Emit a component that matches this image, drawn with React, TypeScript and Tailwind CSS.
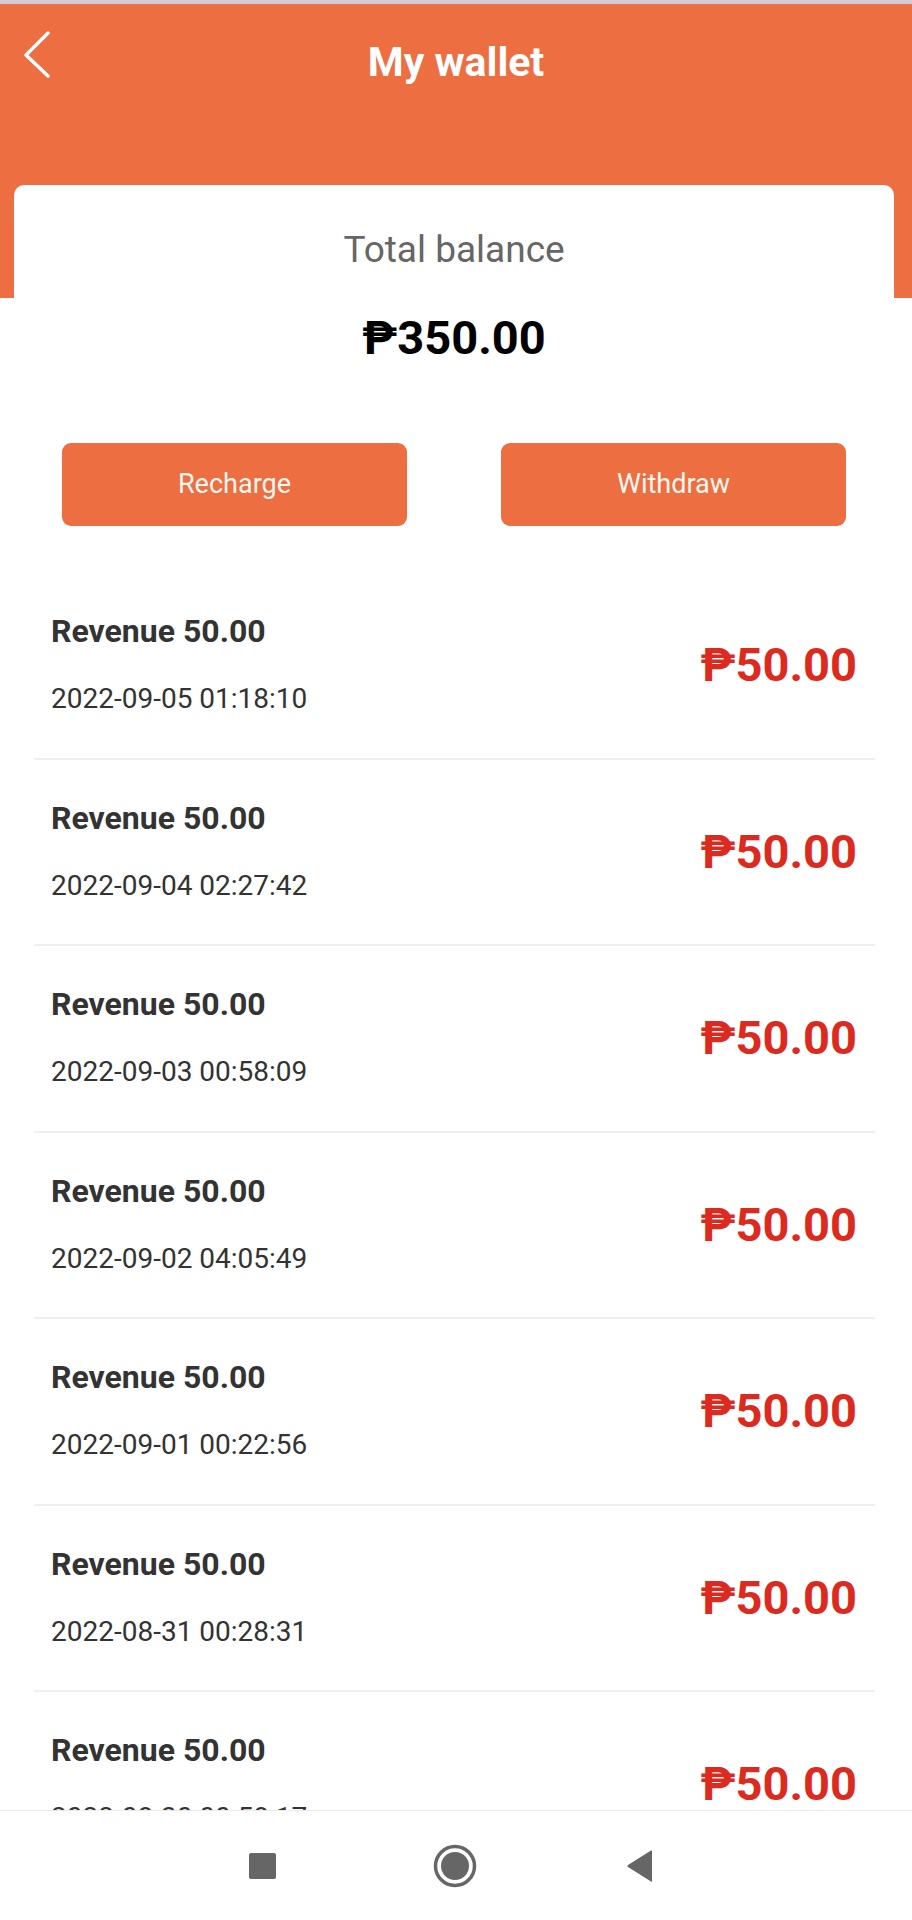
import React from "react";

const rows = [
  "2022-09-05 01:18:10",
  "2022-09-04 02:27:42",
  "2022-09-03 00:58:09",
  "2022-09-02 04:05:49",
  "2022-09-01 00:22:56",
  "2022-08-31 00:28:31",
  "2022-08-30 00:58:17",
];

export default function App() {
  return (
    <div
      className="w-[912px] h-[1920px] flex flex-col bg-white overflow-hidden"
      style={{ fontFamily: "Roboto, 'Noto Sans', 'DejaVu Sans', sans-serif" }}
    >
      <div className="flex-1 overflow-hidden flex flex-col">
        <div className="h-[4px] bg-[#cfccd6] shrink-0" />
        <div className="h-[294px] bg-[#ec6e41] shrink-0 grid grid-cols-[1fr_auto_1fr] items-start">
          <div className="pl-[20px] pt-[24px]">
            <svg width="34" height="54" viewBox="0 0 34 54" fill="none">
              <polyline
                points="28,5 6,27 28,48"
                stroke="#ffffff"
                strokeWidth="3.5"
                strokeLinecap="round"
                strokeLinejoin="round"
              />
            </svg>
          </div>
          <div className="pt-[33px] text-[41px] leading-[50px] font-bold text-white">My wallet</div>
          <div />
        </div>
        <div className="mx-[14px] mr-[18px] -mt-[113px] bg-white rounded-t-[10px] pt-[41px] px-[48px] flex flex-col items-center shrink-0">
          <div className="text-[37px] leading-[48px] text-[#666666]">Total balance</div>
          <div className="mt-[36px] text-[47px] leading-[56px] font-bold text-black">₱350.00</div>
          <div className="mt-[77px] w-full flex justify-between">
            <button className="w-[345px] h-[83px] rounded-[9px] bg-[#ec6e41] text-[27px] text-[#fff8f0]">
              Recharge
            </button>
            <button className="w-[345px] h-[83px] rounded-[9px] bg-[#ec6e41] text-[27px] text-[#fff8f0]">
              Withdraw
            </button>
          </div>
        </div>
        <div className="mt-[47px] ml-[34px] mr-[37px] flex flex-col shrink-0">
          {rows.map((d) => (
            <div
              key={d}
              className="h-[186.5px] shrink-0 border-b-2 border-[#efefef] flex items-center justify-between pl-[17px] pr-[18px]"
            >
              <div className="flex flex-col">
                <div className="text-[32px] leading-[40px] font-bold text-[#333333]">Revenue 50.00</div>
                <div className="mt-[28px] text-[28px] leading-[40px] text-[#333333]">{d}</div>
              </div>
              <div className="text-[47px] leading-[56px] font-bold text-[#dc2a1f]">₱50.00</div>
            </div>
          ))}
        </div>
      </div>
      <div className="h-[110px] shrink-0 border-t border-[#ebebeb] bg-white flex items-center">
        <div className="w-[263px] flex justify-end">
          <div className="w-[27px] h-[26px] rounded-[2px] bg-[#666666] -mr-[13px]" />
        </div>
        <div className="flex-1 flex justify-center">
          <svg width="44" height="44" viewBox="0 0 44 44" className="ml-[6px]">
            <circle cx="22" cy="22" r="19.5" fill="none" stroke="#666666" strokeWidth="3.5" />
            <circle cx="22" cy="22" r="14" fill="#666666" />
          </svg>
        </div>
        <div className="w-[272px] flex justify-start">
          <svg width="30" height="34" viewBox="0 0 30 34" className="ml-[-15px]">
            <path d="M27 2 L27 32 Q27 33 26 32.4 L3 18 Q1.5 17 3 16 L26 1.6 Q27 1 27 2 Z" fill="#666666" />
          </svg>
        </div>
      </div>
    </div>
  );
}
